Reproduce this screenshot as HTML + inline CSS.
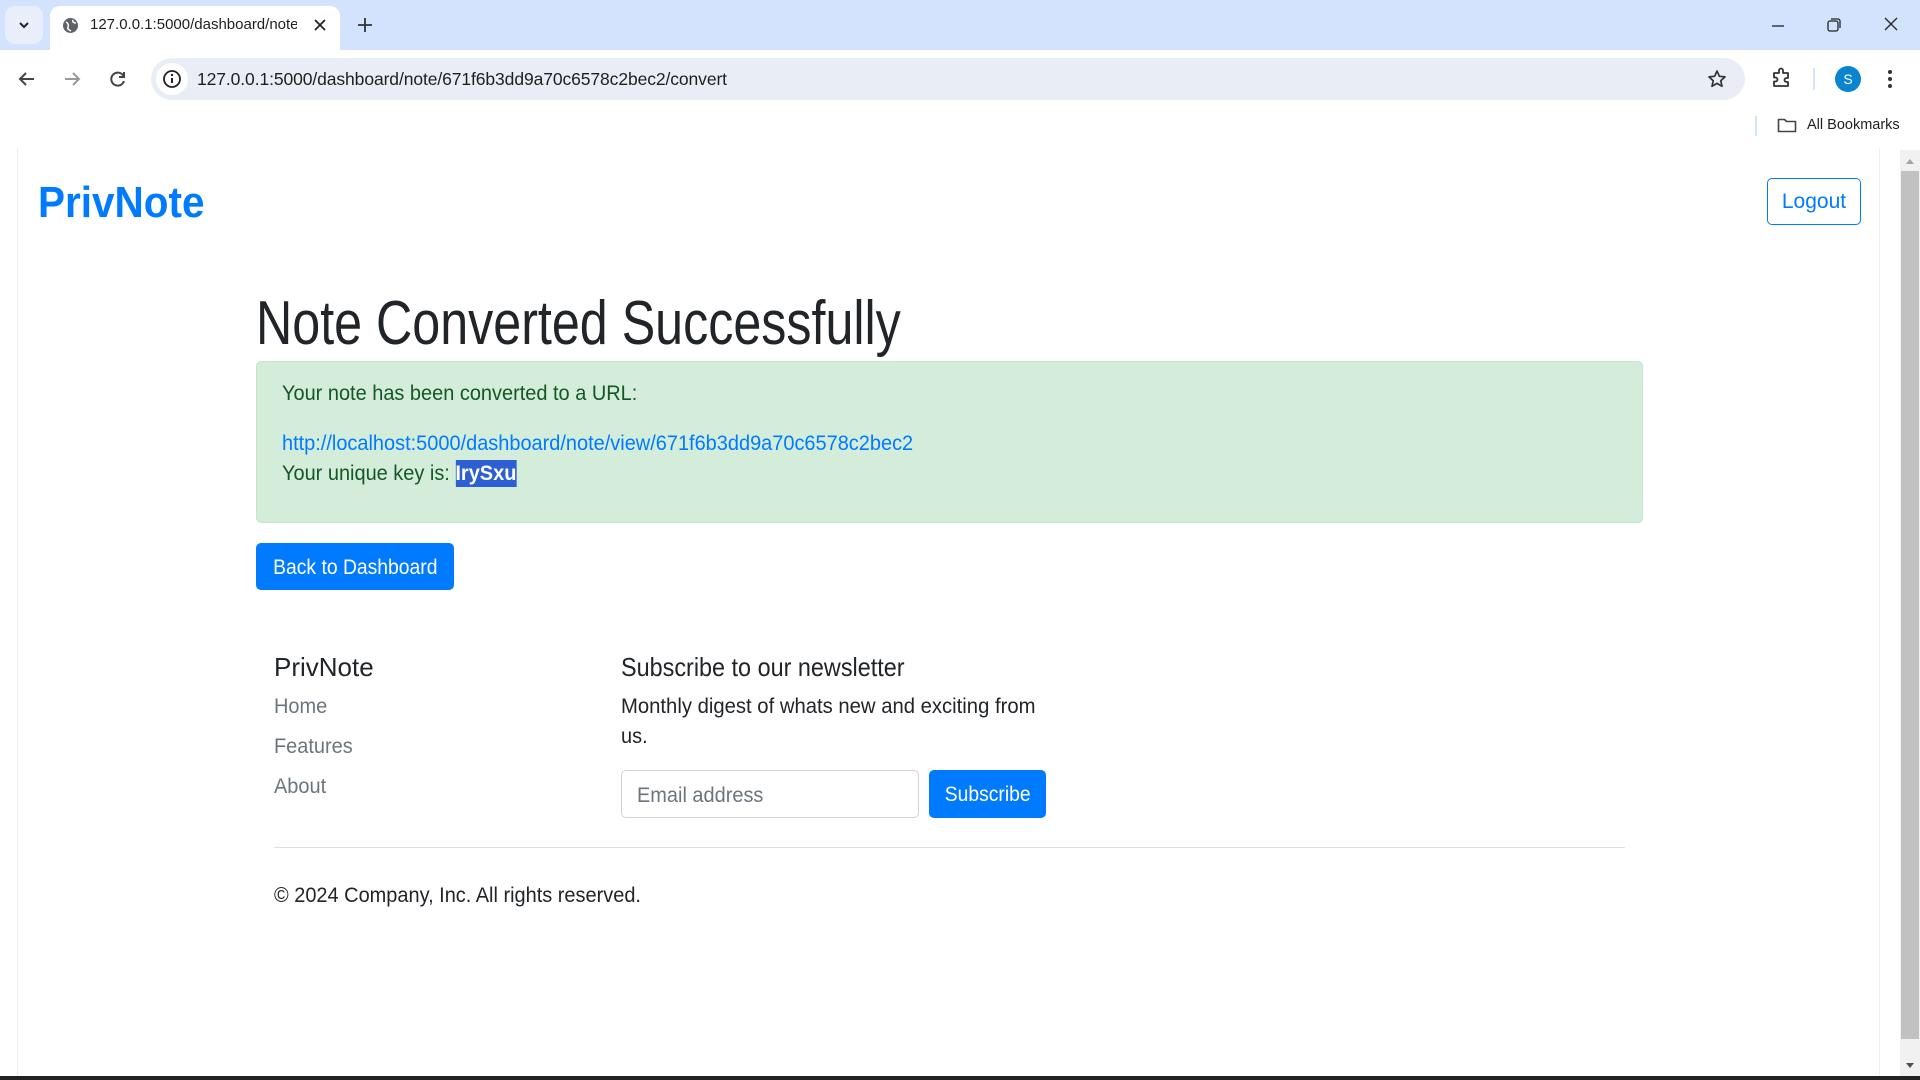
<!DOCTYPE html>
<html><head><meta charset="utf-8"><style>
*{box-sizing:border-box;margin:0;padding:0}
body{width:1920px;height:1080px;overflow:hidden;background:#fff;font-family:"Liberation Sans",sans-serif;position:relative}
.abs{position:absolute}
.tabs{left:0;top:0;width:1920px;height:50px;background:#d3e3fd}
.tab{left:50px;top:6px;width:290px;height:44px;background:#fff;border-radius:10px 10px 0 0}
.toolbar{left:0;top:50px;width:1920px;height:58px;background:#fff}
.omni{left:151px;top:58px;width:1594px;height:42px;background:#e9eef6;border-radius:21px}
.txt{white-space:nowrap}
.c{color:#212529}
.s{transform:scaleX(0.95);transform-origin:left}
</style></head><body>
<div class="abs tabs"></div>
<div class="abs" style="left:5px;top:6px;width:38px;height:38px;background:#e8effb;border-radius:10px"></div>
<svg class="abs" style="left:17px;top:18px" width="14" height="14"><path d="M3 5l4 4 4-4" stroke="#222" stroke-width="2" fill="none"/></svg>
<div class="abs tab"></div>
<svg class="abs" style="left:62px;top:17px" width="17" height="17"><circle cx="8.5" cy="8.5" r="7.5" fill="#5f6368"/><path d="M4 5c2 1 3 3 2 5s1 3 3 4M11 3c-1 2 1 3 3 3" stroke="#fff" stroke-width="1.5" fill="none"/></svg>
<div class="abs txt" style="left:90px;top:16px;font-size:15px;color:#1f1f1f;width:207px;overflow:hidden">127.0.0.1:5000/dashboard/note/</div>
<svg class="abs" style="left:313px;top:18px" width="14" height="14"><path d="M2 2l10 10M12 2L2 12" stroke="#222" stroke-width="1.8"/></svg>
<svg class="abs" style="left:357px;top:17px" width="16" height="16"><path d="M8 1v14M1 8h14" stroke="#333" stroke-width="1.8"/></svg>
<svg class="abs" style="left:1770px;top:18px" width="16" height="16"><path d="M2 8h12" stroke="#222" stroke-width="1.3"/></svg>
<svg class="abs" style="left:1826px;top:17px" width="16" height="16"><rect x="2" y="4" width="10" height="10" rx="2" stroke="#222" stroke-width="1.3" fill="none"/><path d="M5 2h7a2 2 0 0 1 2 2v7" stroke="#222" stroke-width="1.3" fill="none"/></svg>
<svg class="abs" style="left:1883px;top:16px" width="16" height="16"><path d="M2 2l12 12M14 2L2 14" stroke="#222" stroke-width="1.3"/></svg>
<div class="abs toolbar"></div>
<svg class="abs" style="left:17px;top:70px" width="20" height="18"><path d="M17 9H3M9 3L3 9l6 6" stroke="#444" stroke-width="2" fill="none"/></svg>
<svg class="abs" style="left:62px;top:70px" width="20" height="18"><path d="M3 9h14M11 3l6 6-6 6" stroke="#999" stroke-width="2" fill="none"/></svg>
<svg class="abs" style="left:108px;top:69px" width="20" height="20"><path d="M15.5 7A6.5 6.5 0 1 0 16 12" stroke="#444" stroke-width="2" fill="none"/><path d="M16 3v5h-5" stroke="#444" stroke-width="2" fill="none"/></svg>
<div class="abs omni"></div>
<div class="abs" style="left:156px;top:63px;width:32px;height:32px;border-radius:16px;background:#fff"></div>
<svg class="abs" style="left:162px;top:69px" width="20" height="20"><circle cx="10" cy="10" r="8" stroke="#222" stroke-width="1.8" fill="none"/><path d="M10 9v5" stroke="#222" stroke-width="2"/><circle cx="10" cy="6" r="1.2" fill="#222"/></svg>
<div class="abs txt" style="left:197px;top:69px;font-size:17.5px;color:#1f1f1f;letter-spacing:-0.1px">127.0.0.1:5000/dashboard/note/671f6b3dd9a70c6578c2bec2/convert</div>
<svg class="abs" style="left:1707px;top:69px" width="20" height="20"><path d="M10 2l2.4 5.3 5.6.6-4.2 3.8 1.2 5.6L10 14.4 5 17.3l1.2-5.6L2 7.9l5.6-.6z" stroke="#333" stroke-width="1.7" fill="none" stroke-linejoin="round"/></svg>
<svg class="abs" style="left:1771px;top:67px" width="22" height="22"><path d="M3 6h5V3.5a2 2 0 0 1 4 0V6h5v5h-1.5a2 2 0 0 0 0 4H17v4H3v-4.5h1.5a2 2 0 0 0 0-4H3z" stroke="#333" stroke-width="1.8" fill="none" stroke-linejoin="round"/></svg>
<div class="abs" style="left:1813px;top:68px;width:2px;height:22px;background:#d3e3fd"></div>
<div class="abs" style="left:1835px;top:66px;width:26px;height:26px;border-radius:13px;background:#0b84d0;color:#fff;font-size:14px;text-align:center;line-height:26px">S</div>
<svg class="abs" style="left:1887px;top:68px" width="6" height="22"><circle cx="3" cy="4" r="2" fill="#333"/><circle cx="3" cy="11" r="2" fill="#333"/><circle cx="3" cy="18" r="2" fill="#333"/></svg>
<div class="abs" style="left:1755px;top:116px;width:2px;height:20px;background:#d3e3fd"></div>
<svg class="abs" style="left:1777px;top:117px" width="20" height="16"><path d="M1.5 2.5h6l2 2h9v10h-17z" stroke="#444" stroke-width="1.6" fill="none" stroke-linejoin="round"/></svg>
<div class="abs txt" style="left:1807px;top:117px;font-size:14.5px;color:#1f1f1f">All Bookmarks</div>

<div class="abs" style="left:17px;top:148px;width:1px;height:930px;background:#eee"></div>
<div class="abs" style="left:1879px;top:148px;width:1px;height:930px;background:#eee"></div>
<div class="abs" style="left:1900px;top:150px;width:20px;height:927px;background:#f1f1f1"></div>
<div class="abs" style="left:1901px;top:171px;width:18px;height:868px;background:#c1c1c1"></div>
<svg class="abs" style="left:1904px;top:157px" width="12" height="8"><path d="M2 7l4-5 4 5z" fill="#a3a3a3"/></svg>
<svg class="abs" style="left:1904px;top:1062px" width="12" height="8"><path d="M2 1l4 5 4-5z" fill="#505050"/></svg>
<div class="abs" style="left:0;top:1076px;width:1920px;height:4px;background:#222"></div>

<div class="abs txt" style="left:38px;top:178px;font-size:44px;font-weight:bold;color:#007bff;transform:scaleX(0.92);transform-origin:left">PrivNote</div>
<div class="abs" style="left:1767px;top:178px;width:94px;height:47px;border:1.5px solid #007bff;border-radius:5px;color:#007bff;font-size:21px;text-align:center;line-height:46px">Logout</div>

<div class="abs txt c" style="left:256px;top:289px;font-size:62px;line-height:70px;transform:scaleX(0.81);transform-origin:left">Note Converted Successfully</div>

<div class="abs" style="left:256px;top:361px;width:1387px;height:162px;background:#d4edda;border:1.5px solid #c3e6cb;border-radius:5px"></div>
<div class="abs txt s" style="left:282px;top:382px;font-size:21px;color:#155724">Your note has been converted to a URL:</div>
<div class="abs txt s" style="left:282px;top:432px;font-size:21px;color:#007bff">http://localhost:5000/dashboard/note/view/671f6b3dd9a70c6578c2bec2</div>
<div class="abs txt s" style="left:282px;top:462px;font-size:21px;color:#155724">Your unique key is: <span style="background:#2d5fd3;color:#fff;font-weight:bold;padding:2px 0">IrySxu</span></div>

<div class="abs" style="left:256px;top:543px;width:198px;height:47px;background:#007bff;border-radius:5px;color:#fff;font-size:21px;line-height:49px;text-align:center"><span style="display:inline-block;transform:scaleX(0.92)">Back to Dashboard</span></div>

<div class="abs txt c" style="left:274px;top:652px;font-size:26px">PrivNote</div>
<div class="abs txt s" style="left:274px;top:695px;font-size:21px;color:#6c757d">Home</div>
<div class="abs txt s" style="left:274px;top:735px;font-size:21px;color:#6c757d">Features</div>
<div class="abs txt s" style="left:274px;top:775px;font-size:21px;color:#6c757d">About</div>

<div class="abs txt c" style="left:621px;top:652px;font-size:26px;font-weight:bold;transform:scaleX(0.9);transform-origin:left;font-weight:normal">Subscribe to our newsletter</div>
<div class="abs txt c" style="left:621px;top:695px;font-size:21px;transform:scaleX(0.965);transform-origin:left">Monthly digest of whats new and exciting from</div>
<div class="abs txt c s" style="left:621px;top:725px;font-size:21px">us.</div>
<div class="abs" style="left:621px;top:770px;width:298px;height:48px;border:1.5px solid #ced4da;border-radius:5px"></div>
<div class="abs txt s" style="left:637px;top:784px;font-size:21px;color:#6c757d">Email address</div>
<div class="abs" style="left:929px;top:770px;width:117px;height:48px;background:#007bff;border-radius:5px;color:#fff;font-size:21px;line-height:50px;text-align:center"><span style="display:inline-block;transform:scaleX(0.92)">Subscribe</span></div>
<div class="abs" style="left:274px;top:847px;width:1351px;height:1px;background:#dee2e6"></div>
<div class="abs txt c s" style="left:274px;top:884px;font-size:21px">© 2024 Company, Inc. All rights reserved.</div>
</body></html>
